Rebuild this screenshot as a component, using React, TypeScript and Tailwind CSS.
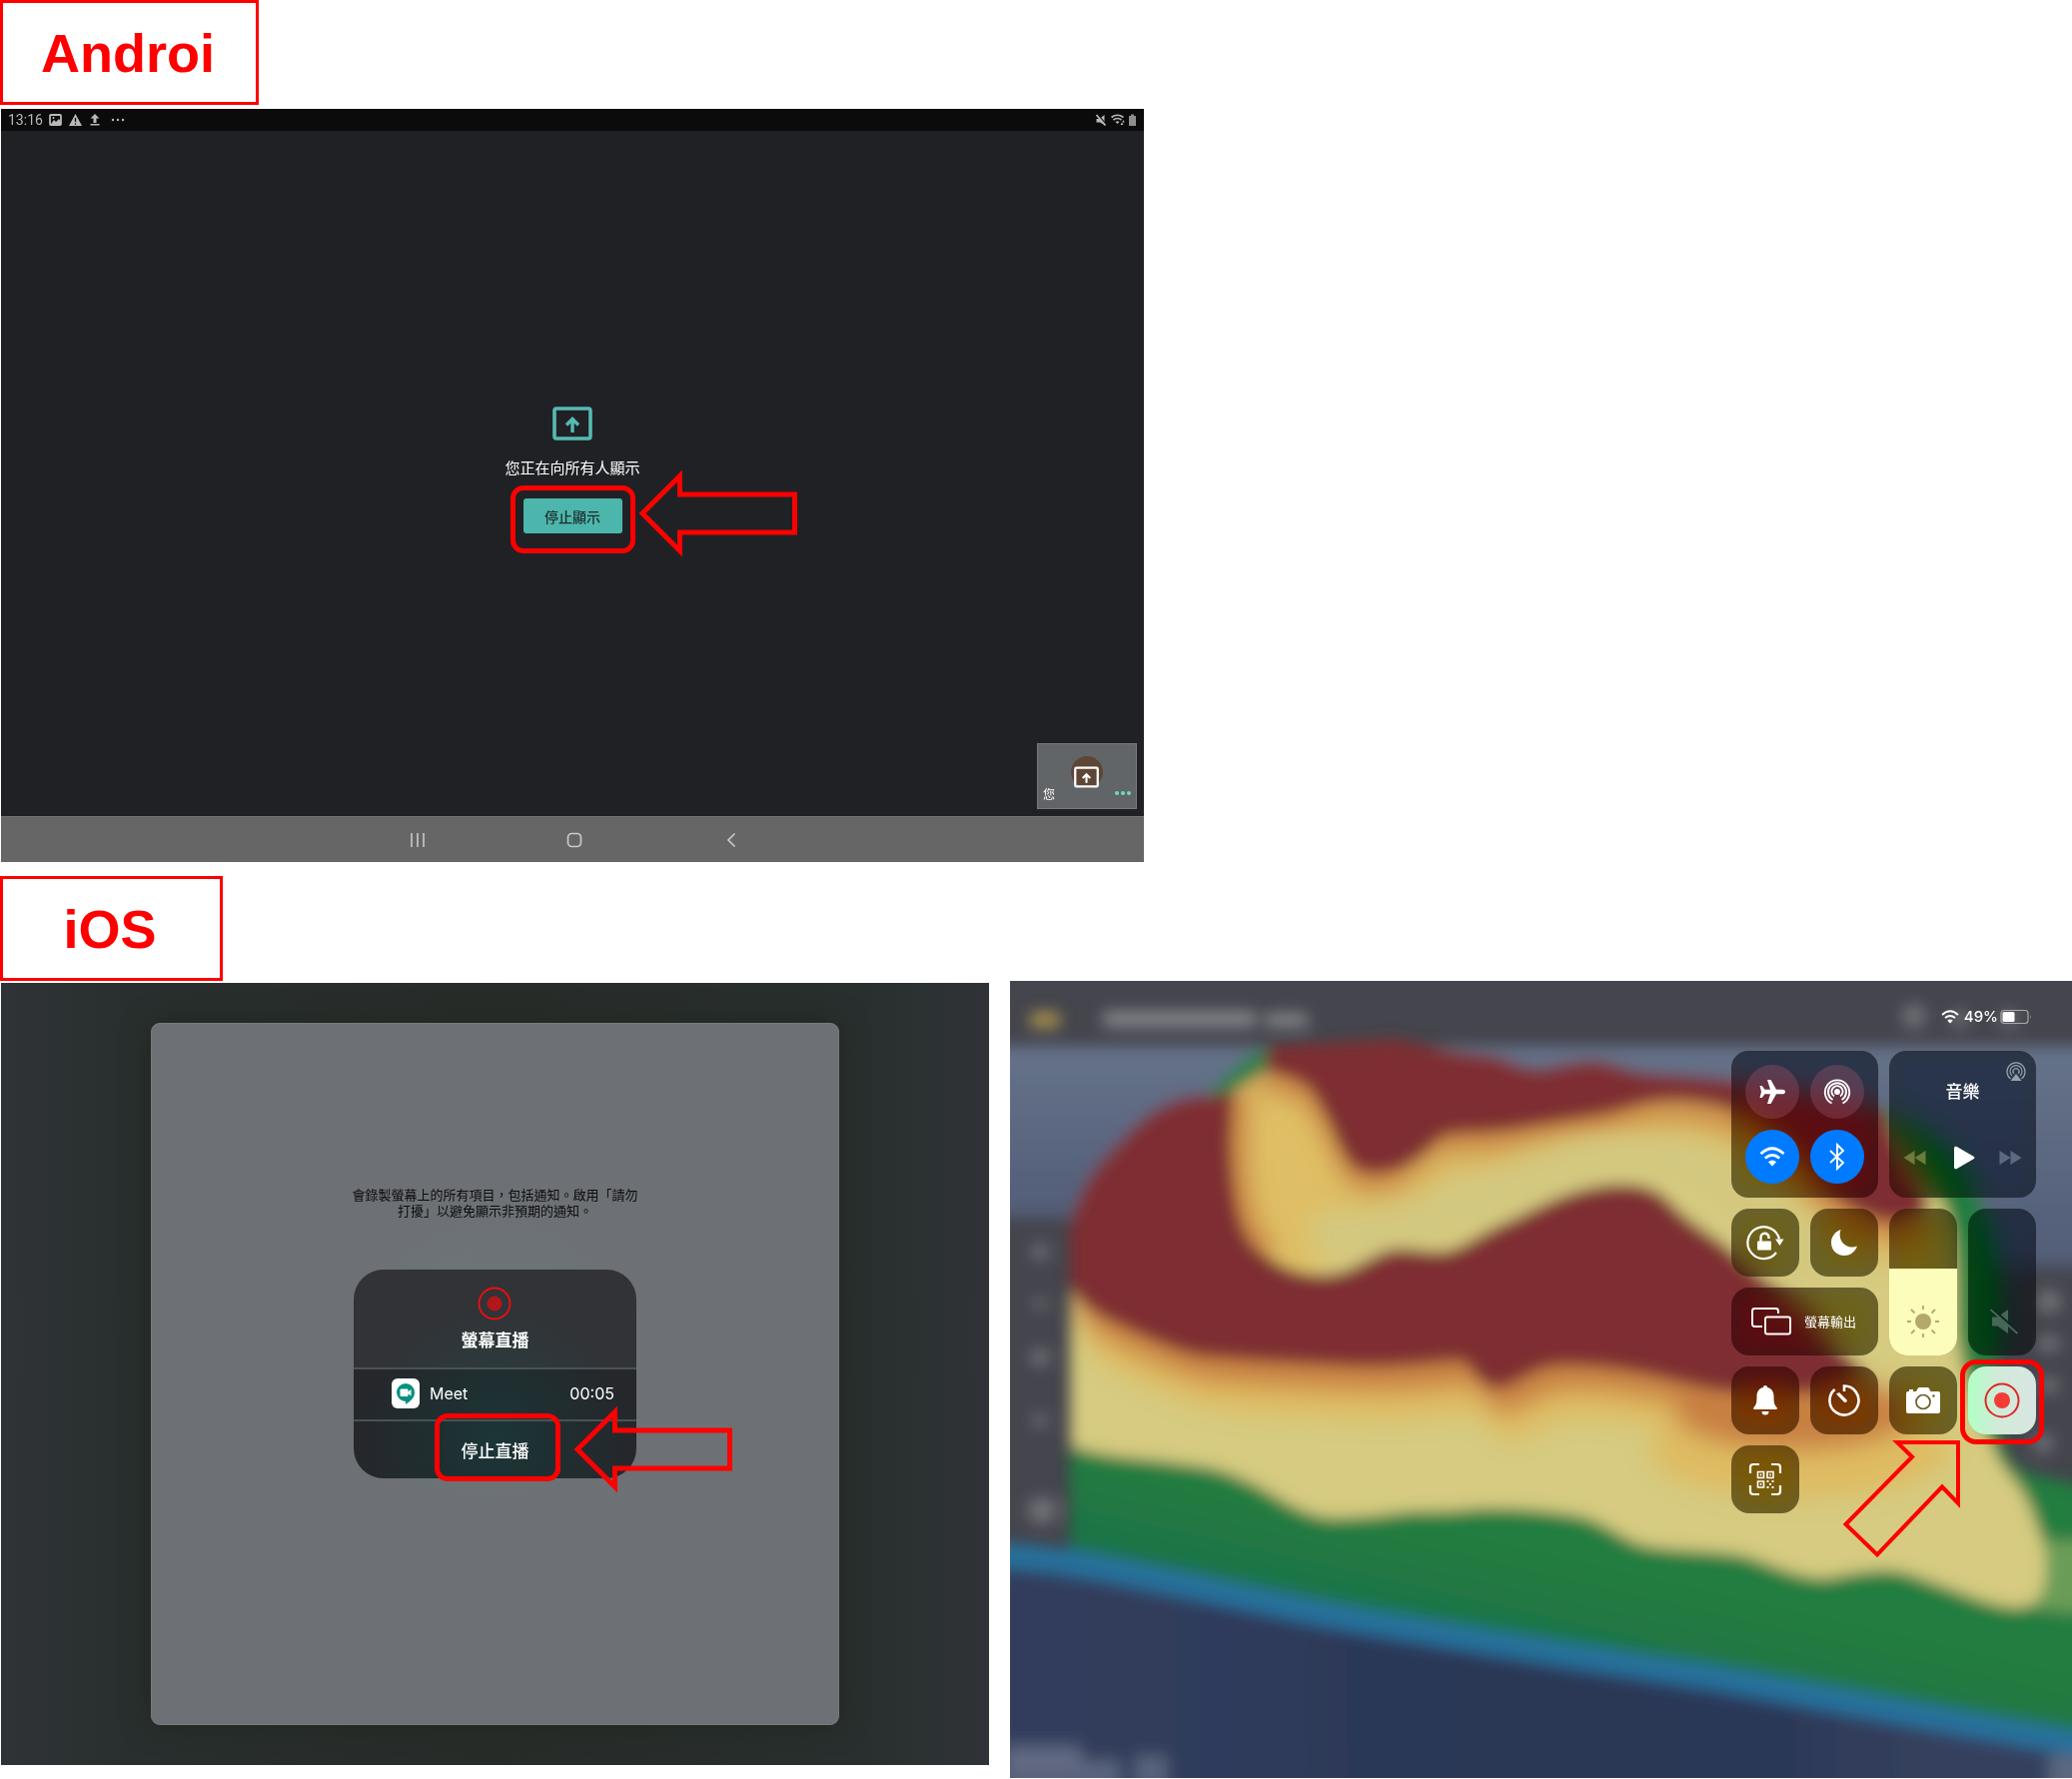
import React from "react";

const CJK = "font-['Noto_Sans_CJK_TC',sans-serif]";
const LATIN = "font-[Inter,'Liberation_Sans',sans-serif]";

function PlatformLabel({ children, className }: { children: React.ReactNode; className: string }) {
  return (
    <h2
      className={`flex h-[105px] items-center justify-center border-[3px] border-[#ff0000] bg-white pr-[3px] font-['Liberation_Sans',Arial,sans-serif] text-[54px] leading-none font-bold text-[#ff0000] ${className}`}
    >
      {children}
    </h2>
  );
}

function LeftArrow({ className }: { className: string }) {
  return (
    <svg aria-hidden="true" width="159" height="88" viewBox="0 0 159 88" className={`pointer-events-none absolute ${className}`}>
      <path d="M4 44 41.500 6.500V25H156.500V63H41.500V81.500Z" fill="none" stroke="#ff0000" strokeWidth="5" strokeMiterlimit="10" />
    </svg>
  );
}

function PresentIcon({ className }: { className: string }) {
  return (
    <svg aria-hidden="true" viewBox="0 0 40 34" className={className}>
      <rect x="2" y="2" width="36" height="30" rx="2" fill="none" stroke="currentColor" strokeWidth="3.600" />
      <path d="M20 26V13M14 18.500l6-6 6 6" fill="none" stroke="currentColor" strokeWidth="3.400" />
    </svg>
  );
}

function AndroidScreen() {
  return (
    <section aria-label="Android" className="mx-px mt-1 flex aspect-[1144/754] w-[55.160%] min-w-[640px] flex-col bg-[#202125]">
      <header className="flex h-[22px] items-center bg-[#0b0b0c] pr-[7px] pl-[7px] text-[#b9b9b9]">
        <time className="mr-[7px] w-[34px] font-[Roboto,sans-serif] text-[14px] leading-none">13:16</time>
        <svg aria-hidden="true" width="80" height="14" viewBox="0 0 80 14">
          <rect x="1" y="2" width="11" height="10" rx="1" fill="none" stroke="currentColor" strokeWidth="1.800" />
          <path d="M2 11l3-4 2 2 3-3 2 3v2z" fill="currentColor" />
          <circle cx="4.500" cy="5" r="1" fill="currentColor" />
          <path d="M26.500 1 33 13H20z" fill="currentColor" />
          <path d="M26.500 5v4M26.500 10.300v1.500" stroke="#0b0b0c" strokeWidth="1.300" />
          <path d="M46 1l4.500 4.500h-3V10h-3V5.500h-3zM41.500 11h9v1.500h-9z" fill="currentColor" />
          <circle cx="64" cy="7" r="1.200" fill="currentColor" />
          <circle cx="69" cy="7" r="1.200" fill="currentColor" />
          <circle cx="74" cy="7" r="1.200" fill="currentColor" />
        </svg>
        <svg aria-hidden="true" width="42" height="14" viewBox="0 0 42 14" className="ml-auto">
          <path d="M1.500 6h3L9.500 2v10L5 9.500H1.500z" fill="currentColor" />
          <path d="M2 1l9.500 11" stroke="#0b0b0c" strokeWidth="1.600" />
          <path d="M1.500 2l9 10.500" stroke="currentColor" strokeWidth="1.800" />
          <path d="M16.500 4.500q6-4.500 12 0M18.500 7q4-3 8 0" fill="none" stroke="currentColor" strokeWidth="1.700" />
          <path d="M20.500 9q2-1.500 4 0l-2 2z" fill="currentColor" />
          <path d="M25.500 12l1.500-2.500 1.500 2.500zM28.500 7l1.200 2.500h-2.400z" fill="currentColor" />
          <path d="M34 3h2V1.500h3V3h2v10h-7z" fill="#8d8d8d" />
        </svg>
      </header>

      <div className="relative flex flex-1 flex-col items-center justify-center pb-[7px]">
        <PresentIcon className="h-[34px] w-10 text-[#55bbb2]" />
        <p className={`mt-[15px] mb-[19px] text-[15px] leading-6 text-white ${CJK}`}>您正在向所有人顯示</p>
        <div className="relative">
          <button type="button" className={`block h-[35px] w-[99px] rounded-[3px] bg-[#4db6ac] text-[14px] leading-none font-medium text-[#1c2b2c] ${CJK}`}>
            停止顯示
          </button>
          <div className="pointer-events-none absolute -inset-x-[13px] -top-[13px] -bottom-[20px] rounded-[13px] border-[5px] border-[#ff0000]" />
          <LeftArrow className="-top-[29px] left-[115px]" />
        </div>

        <div className="absolute right-[7px] bottom-[7px] flex h-[66px] w-[100px] items-end justify-between border border-[#77797c] bg-[#626568] px-[5px] pb-1">
          <span className={`text-[12px] leading-5 text-white ${CJK}`}>您</span>
          <div className="absolute top-[12px] left-[33px] size-8 rounded-full bg-[#5d4636]" />
          <PresentIcon className="absolute top-[22px] left-[36px] h-[22px] w-[25px] text-white" />
          <svg aria-hidden="true" width="16" height="20" viewBox="0 0 16 20">
            <circle cx="2" cy="9" r="2" fill="#6fdcb8" />
            <circle cx="8" cy="9" r="2" fill="#6fdcb8" />
            <circle cx="14" cy="9" r="2" fill="#6fdcb8" />
          </svg>
        </div>
      </div>

      <nav className="flex h-[46px] items-center justify-center gap-[141px] border-t border-[#747474] bg-[#666] pl-1 text-[#c9c9c9]">
        <button type="button" aria-label="Recents">
          <svg width="16" height="16" viewBox="0 0 16 16"><path d="M2 1v14M8 1v14M14 1v14" stroke="currentColor" strokeWidth="1.600" /></svg>
        </button>
        <button type="button" aria-label="Home">
          <svg width="16" height="16" viewBox="0 0 16 16"><rect x="1.500" y="1.500" width="13" height="13" rx="4" fill="none" stroke="currentColor" strokeWidth="1.700" /></svg>
        </button>
        <button type="button" aria-label="Back">
          <svg width="16" height="16" viewBox="0 0 16 16"><path d="M11.500 1.500 5 8l6.500 6.500" fill="none" stroke="currentColor" strokeWidth="1.700" /></svg>
        </button>
      </nav>
    </section>
  );
}

function BroadcastScreen() {
  return (
    <section aria-label="iOS" className="mt-0.5 ml-px flex aspect-[989/783] justify-center self-start bg-[linear-gradient(90deg,#2f3337_0%,#292f2e_13%,#272c29_50%,#292f2e_87%,#2f3337_100%)] py-10">
      <div className="flex w-[69.700%] flex-col items-center rounded-[9px] border border-[#777b7e] bg-[#6d7074] bg-[radial-gradient(circle_at_50%_48%,#6c777b_0%,#6d7074_35%)] pt-[163px] shadow-[0_0_28px_#20281f]">
        <p className={`text-center text-[13px] leading-4 text-[#0b0c0d] ${CJK}`}>
          會錄製螢幕上的所有項目，包括通知。啟用「請勿
          <br />
          打擾」以避免顯示非預期的通知。
        </p>

        <div className={`mt-[51px] flex w-[283px] flex-col rounded-[30px] bg-[#25272b] bg-[radial-gradient(circle_at_50%_82%,#1b3638_0%,#1f2f31_25%,#25272b_62%)] text-[17px] leading-6 text-white ${CJK}`}>
          <div className="flex h-[98px] flex-col items-center rounded-t-[30px] bg-white/6 pt-[17px]">
            <svg aria-hidden="true" width="34" height="34" viewBox="0 0 34 34">
              <circle cx="17" cy="17" r="15.500" fill="none" stroke="#f20d0d" strokeWidth="1.800" />
              <circle cx="17" cy="17" r="7.500" fill="#b01719" />
            </svg>
            <h3 className="mt-[7px] font-bold">螢幕直播</h3>
          </div>
          <div className="flex h-[54px] items-center border-y-2 border-[#485254] pr-[22px] pb-0.5 pl-[38px]">
            <svg aria-hidden="true" width="28" height="30" viewBox="0 0 28 30">
              <rect width="28" height="30" rx="6" fill="#fff" />
              <path d="M14 5a9 9 0 0 1 9 9.500c0 5-4.500 8.500-9 11.500v-3a9 9 0 0 1-9-9A9 9 0 0 1 14 5z" fill="#098f7e" />
              <rect x="8.500" y="10.500" width="8" height="7.500" rx="1" fill="#fff" />
              <path d="M16 13.500l3.500-2.500v6.500L16 15z" fill="#fff" />
            </svg>
            <span className={`ml-[10px] text-[16px] ${LATIN}`}>Meet</span>
            <time className={`ml-auto text-[16px] ${LATIN}`}>00:05</time>
          </div>
          <div className="relative h-[57px]">
            <button type="button" className="block h-full w-full rounded-b-[30px] font-medium">停止直播</button>
            <div className="pointer-events-none absolute -top-2 -bottom-[3px] left-[81px] w-[126px] rounded-[13px] border-[5px] border-[#ff0000]" />
            <LeftArrow className="-top-4 left-[220px]" />
          </div>
        </div>
      </div>
    </section>
  );
}

const LOWER_LOBE =
  "M58 300 C56 270 58 245 65 230 C80 200 90 182 104 168 C120 150 135 135 150 127 C170 116 190 112 222 110 C216 150 218 190 223 220 C228 250 236 265 246 271 C268 289 290 297 310 297 C330 298 345 290 356 284 C370 276 380 271 388 271 C405 271 420 275 434 274 C455 271 470 256 494 246 C520 235 540 222 563 215 C585 208 605 205 623 207 C640 209 648 214 655 220 C672 240 690 250 708 263 C725 276 740 290 756 303 C785 320 808 335 812 350 C818 368 845 380 852 394 C840 412 760 412 715 408 C680 403 650 392 623 388 C590 382 565 380 540 383 C515 388 505 404 485 405 C465 400 465 377 448 377 C415 380 390 383 356 383 C290 380 240 378 186 372 C150 362 125 348 104 339 C85 330 68 318 58 300Z";
const UPPER_LOBE =
  "M249 86 C248 76 250 72 256 68 C300 64 340 64 384 60 C400 62 415 67 430 70 C450 76 465 74 485 75 C500 80 515 90 531 88 C550 86 568 79 586 80 C605 82 622 92 641 93 C665 95 690 96 709 98 C760 104 830 112 868 126 C882 150 892 180 908 205 C935 238 890 246 860 232 C835 222 815 205 800 190 C775 160 745 130 709 122 C690 118 665 116 646 118 C625 120 605 130 586 132 C555 137 525 142 494 147 C470 150 450 147 434 152 C420 160 412 174 402 178 C390 186 380 190 370 189 C355 190 350 188 342 180 C330 165 328 150 320 137 C312 120 305 107 297 101 C280 92 265 90 249 86Z";
const RELIEF =
  "M60 465 V250 C65 215 85 185 104 168 C120 150 135 135 150 127 C170 116 190 114 205 114 C225 98 240 80 256 66 C300 62 340 62 384 58 C415 64 450 73 485 75 C500 80 515 90 531 88 C550 86 568 79 586 80 C605 82 622 92 641 93 C720 97 830 112 870 126 C890 155 910 195 935 222 C948 255 948 300 948 350 C955 400 972 440 990 478 C1005 500 1020 515 1026 540 C1038 565 1042 600 1028 622 C1010 634 985 624 965 618 C940 608 925 603 905 596 C880 585 845 593 820 598 C790 600 765 585 735 576 C705 570 665 572 632 565 C605 555 590 538 563 535 C535 530 500 528 471 528 C445 532 425 531 402 531 C375 535 350 538 320 538 C305 536 295 532 287 528 C265 518 250 505 232 499 C215 490 195 486 173 484 C140 478 90 478 60 465Z";

const GHOSTS = [
  [30, 271, 9, 9], [30, 323, 7, 6], [30, 377, 11, 9], [30, 440, 8, 7], [32, 530, 15, 14],
  [1040, 321, 13, 12], [1040, 363, 12, 9], [1040, 405, 10, 9], [1034, 463, 11, 10],
  [905, 35, 13, 12], [950, 38, 10, 8], [1000, 38, 10, 8],
];

function Wallpaper() {
  return (
    <svg aria-hidden="true" viewBox="0 0 1063 798" preserveAspectRatio="none" className="absolute inset-0 h-full w-full">
      <defs>
        <filter id="soft" x="-5%" y="-5%" width="110%" height="110%"><feGaussianBlur stdDeviation="7.500" /></filter>
        <filter id="band" x="-10%" y="-20%" width="120%" height="140%"><feGaussianBlur stdDeviation="10" /></filter>
        <clipPath id="relief"><path d={RELIEF} /></clipPath>
        <linearGradient id="sky" x1="0" y1="0" x2="0" y2="1"><stop offset="0" stopColor="#66738a" /><stop offset="1" stopColor="#525d77" /></linearGradient>
        <linearGradient id="navy" x1="0" y1="0" x2="1" y2="0"><stop offset="0" stopColor="#333f5e" /><stop offset="0.450" stopColor="#2a3757" /><stop offset="0.700" stopColor="#2b3858" /><stop offset="0.850" stopColor="#36415e" /><stop offset="1" stopColor="#32415f" /></linearGradient>
        <linearGradient id="grass" gradientUnits="userSpaceOnUse" x1="500" y1="560" x2="470" y2="690"><stop offset="0" stopColor="#237d3f" /><stop offset="1" stopColor="#1c7049" /></linearGradient>
      </defs>
      <rect width="1063" height="798" fill="#44454d" />
      <g filter="url(#soft)">
        <rect x="-30" y="65" width="1130" height="172" fill="url(#sky)" />
        <rect x="900" y="65" width="200" height="222" fill="url(#sky)" />
        <path d="M60 440 L60 600 L1100 790 V510 C1050 500 1010 495 1000 478 C985 440 988 400 988 300 C985 230 960 160 870 126 L850 300 L600 500Z" fill="url(#grass)" />
        <path d="M1035 560 L1100 560 V635 L1030 630Z" fill="#6b9c58" />
        <g clipPath="url(#relief)">
          <path d={RELIEF} fill="#d6cb80" />
          <g filter="url(#band)">
            <path d={LOWER_LOBE} transform="translate(14 56)" fill="#dfbb62" />
            <ellipse cx="790" cy="470" rx="150" ry="48" fill="#dfbb62" />
            <path d={UPPER_LOBE} transform="translate(4 44)" fill="#dcb962" />
            <path d="M215 90 H300 L350 230 L300 300 L225 280Z" fill="#dfbf65" />
            <path d={LOWER_LOBE} transform="translate(8 28)" fill="#c87f43" />
            <ellipse cx="785" cy="432" rx="120" ry="38" fill="#c87f43" />
            <path d={UPPER_LOBE} transform="translate(-6 20)" fill="#c87f43" />
            <path d="M222 110 C216 150 218 190 223 220 C228 250 236 265 256 278" fill="none" stroke="#c87f43" strokeWidth="38" />
          </g>
          <path d="M320 252 C370 262 440 236 520 200 C580 170 640 160 700 195 C730 215 750 240 800 280" fill="none" stroke="#d3c87f" strokeWidth="46" strokeLinecap="round" filter="url(#band)" />
          <path d={LOWER_LOBE} fill="#7e2f32" stroke="#7e2f32" strokeWidth="6" />
          <path d={UPPER_LOBE} fill="#7e2f32" stroke="#7e2f32" strokeWidth="6" />
        </g>
        <path d="M196 116 C215 95 235 76 258 64 L256 90 L222 112Z" fill="#2a8048" />
        <path d="M-30 573 C100 580 220 618 356 641 C480 662 590 680 709 698 C840 722 960 745 1100 768 V850 H-30Z" fill="url(#navy)" />
        <path d="M-30 575 C60 572 220 618 356 641 C480 662 590 680 709 698 C840 722 960 745 1100 768" fill="none" stroke="#25719c" strokeWidth="25" />
        <g fill="#fff" fillOpacity="0.350">
          <rect x="92" y="30" width="155" height="16" rx="6" />
          <rect x="254" y="32" width="45" height="14" rx="6" />
          <rect x="-5" y="765" width="76" height="18" fillOpacity="0.200" />
          <rect x="-5" y="780" width="115" height="30" fillOpacity="0.200" />
          <rect x="125" y="776" width="32" height="30" fillOpacity="0.200" />
          <rect x="1040" y="775" width="40" height="40" fillOpacity="0.200" />
        </g>
        <rect x="20" y="31" width="30" height="16" rx="5" fill="#a8914f" />
        <g fill="#fff" fillOpacity="0.230">
          {GHOSTS.map(([cx, cy, rx, ry]) => (
            <ellipse key={`${cx}-${cy}`} cx={cx} cy={cy} rx={rx} ry={ry} />
          ))}
        </g>
      </g>
    </svg>
  );
}

const TILE = "bg-black/52 backdrop-blur-md backdrop-saturate-200 text-white";

function Tile({ label, className = "", children }: { label: string; className?: string; children: React.ReactNode }) {
  return (
    <button type="button" aria-label={label} className={`flex items-center justify-center rounded-[18px] ${TILE} ${className}`}>
      {children}
    </button>
  );
}

function Round({ label, className, children }: { label: string; className: string; children: React.ReactNode }) {
  return (
    <button type="button" aria-label={label} className={`flex items-center justify-center rounded-full ${className}`}>
      {children}
    </button>
  );
}

function WifiGlyph({ size }: { size: number }) {
  return (
    <svg aria-hidden="true" width={size} height={size} viewBox="0 0 26 26" fill="none" stroke="currentColor" strokeWidth="2.800">
      <path d="M1.500 10Q13-.5 24.500 10M5.800 14.500q7.200-6.200 14.400 0" />
      <path d="M9 18.300q4-3.400 8 0L13 22.500z" fill="currentColor" stroke="none" />
    </svg>
  );
}

function ControlCenterScreen() {
  return (
    <section aria-label="iOS Control Center" className="relative aspect-[1063/798] overflow-hidden bg-[#44454d]">
      <Wallpaper />
      <div className="relative flex flex-col items-end pr-9">
        <div className="mt-[26px] mb-[24px] flex h-5 items-center text-white">
          <WifiGlyph size={18} />
          <span className={`mr-[2px] ml-[5px] text-[15px] leading-5 font-medium ${LATIN}`}>49%</span>
          <svg aria-hidden="true" width="32" height="16" viewBox="0 0 32 16" className="mr-1">
            <rect x="1" y="1.500" width="27" height="13" rx="3" fill="none" stroke="#a9a9ad" strokeWidth="1.200" />
            <rect x="2.500" y="3" width="12" height="10" rx="1.500" fill="#fff" />
            <path d="M30 6q1.500 2 0 4z" fill="#a9a9ad" />
          </svg>
        </div>

        <div className="grid auto-rows-[68px] grid-cols-[repeat(4,68px)] gap-[11px]">
          <div className={`col-span-2 row-span-2 grid grid-cols-2 gap-[11px] rounded-[17px] p-[14px] ${TILE}`}>
            <Round label="Airplane mode" className="bg-[#a3526a]/35">
              <svg width="28" height="28" viewBox="0 0 28 28" fill="#fff">
                <path d="M27 14c0 1.500-1.500 2.300-3 2.300h-6L12.500 26H9l3-9.700H6.500L3.700 20H1.500L3 14 1.500 8h2.200l2.800 3.700H12L9 2h3.500l5.500 9.700h6c1.500 0 3 .8 3 2.300z" />
              </svg>
            </Round>
            <Round label="AirDrop" className="bg-[#a3526a]/35">
              <svg width="28" height="28" viewBox="0 0 28 28" fill="none" stroke="#fff" strokeWidth="1.900">
                <path d="M8.500 25.500a12.200 12.200 0 1 1 11 0" />
                <path d="M9.500 22a9 9 0 1 1 9 0" />
                <path d="M11 18.500a5.600 5.600 0 1 1 6 0" />
                <circle cx="14" cy="14" r="2" fill="#fff" />
              </svg>
            </Round>
            <Round label="Wi-Fi" className="bg-[#007aff]">
              <WifiGlyph size={26} />
            </Round>
            <Round label="Bluetooth" className="bg-[#007aff]">
              <svg width="20" height="28" viewBox="0 0 20 28" fill="none" stroke="#fff" strokeWidth="1.900">
                <path d="M3 8l13 12-6 6V2l6 6L3 20" />
              </svg>
            </Round>
          </div>

          <div className={`relative col-span-2 row-span-2 flex flex-col items-center justify-between rounded-[17px] px-[14px] pt-7 pb-7 ${TILE}`}>
            <h3 className={`text-[17px] leading-6 font-medium ${CJK}`}>音樂</h3>
            <button type="button" aria-label="AirPlay" className="absolute top-[11px] right-[10px] text-[#99a1ab]">
              <svg width="20" height="20" viewBox="0 0 20 20" fill="none" stroke="currentColor" strokeWidth="1.200">
                <path d="M4.500 17a9 9 0 1 1 11 0M6 14a6 6 0 1 1 8 0M7.800 11.800a3 3 0 1 1 4.400 0" />
                <path d="M10 12l5.500 7h-11z" fill="currentColor" stroke="none" />
              </svg>
            </button>
            <div className="flex w-full items-center justify-between">
              <button type="button" aria-label="Previous" className="text-[#8c9550]/70">
                <svg width="23" height="16" viewBox="0 0 23 16" fill="currentColor"><path d="M11.500 1v14L.500 8zM22.500 1v14l-11-7z" /></svg>
              </button>
              <button type="button" aria-label="Play" className="pl-1">
                <svg width="21" height="24" viewBox="0 0 21 24" fill="#fff"><path d="M0 2.500C0 .8 1.500.3 2.800 1l16.700 9.700c1.200.7 1.200 1.900 0 2.600L2.800 23C1.500 23.700 0 23.200 0 21.500z" /></svg>
              </button>
              <button type="button" aria-label="Next" className="text-[#5c6a7e]">
                <svg width="23" height="16" viewBox="0 0 23 16" fill="currentColor"><path d="M.500 1v14l11-7zM11.500 1v14l11-7z" /></svg>
              </button>
            </div>
          </div>

          <Tile label="Rotation lock">
            <svg width="38" height="36" viewBox="0 0 38 36" fill="none" stroke="#fff">
              <path d="M33 14.500A16 16 0 1 0 30 28" strokeWidth="2.200" />
              <path d="M29 14.500h8.500L33.500 21z" fill="#fff" stroke="none" />
              <rect x="11" y="16.500" width="14" height="9" rx="1" fill="#fff" stroke="none" />
              <path d="M14.500 17v-4a4 4 0 0 1 8-.5v1.500" strokeWidth="2.400" />
            </svg>
          </Tile>
          <Tile label="Do not disturb">
            <svg width="28" height="28" viewBox="0 0 28 28" fill="#fff">
              <path d="M10.500 1C4 3.500 1 8.500 1 14c0 7.500 5.500 13 13 13 5.500 0 10.500-3 13-9.500-9 4-20.500-4-16.500-16.500z" />
            </svg>
          </Tile>

          <div className={`row-span-2 flex flex-col justify-end overflow-hidden rounded-[18px] ${TILE}`}>
            <div className="flex h-[87px] items-end justify-center bg-[#fdfdbb] pb-[17px]">
              <svg role="img" aria-label="Brightness" width="34" height="34" viewBox="0 0 34 34" fill="none" stroke="#b4a86c" strokeWidth="1.800">
                <circle cx="17" cy="17" r="8" fill="#b4a86c" stroke="none" />
                <path d="M17 1v4M17 29v4M1 17h4M29 17h4M5 5l3.500 3.500M25.500 25.500 29 29M5 29l3.500-3.500M25.500 8.500 29 5" />
              </svg>
            </div>
          </div>
          <div className={`row-span-2 flex items-end justify-center rounded-[18px] pb-[21px] pl-1 ${TILE}`}>
            <svg role="img" aria-label="Volume" width="30" height="26" viewBox="0 0 30 26" className="text-[#476656]">
              <path d="M3 8.500h5.500L19 1v24L8.500 17.500H3z" fill="currentColor" />
              <path d="M2.500 0l27 24" stroke="#0d2620" strokeWidth="3" />
              <path d="M1.500 1l27 24" stroke="currentColor" strokeWidth="2" />
            </svg>
          </div>

          <button type="button" className={`col-span-2 flex items-center rounded-[18px] pl-[19px] text-[13px] leading-5 ${TILE} ${CJK}`}>
            <svg aria-hidden="true" width="42" height="30" viewBox="0 0 42 30" fill="none" stroke="#fff" strokeWidth="1.900" className="mr-[12px]">
              <path d="M28 7V4.500Q28 2 25.500 2H4.500Q2 2 2 4.500v13Q2 20 4.500 20H12" />
              <rect x="15" y="10.500" width="25" height="17" rx="2" />
            </svg>
            螢幕輸出
          </button>

          <Tile label="Alerts">
            <svg width="26" height="32" viewBox="0 0 26 32" fill="#fff">
              <path d="M13 1c1.200 0 2 .8 2.200 2C19.500 4 21.500 7.500 21.500 12c0 6 .5 8.500 3 11 .8.800.5 2-.500 2H2c-1 0-1.300-1.200-.5-2 2.500-2.500 3-5 3-11 0-4.500 2-8 6.300-9C11 1.800 11.800 1 13 1zM9.500 27h7a3.500 3.500 0 0 1-7 0z" />
            </svg>
          </Tile>
          <Tile label="Timer">
            <svg width="34" height="34" viewBox="0 0 34 34" fill="none" stroke="#fff" strokeWidth="2.600">
              <path d="M17 8V2.500A14.500 14.500 0 1 1 7.500 6" />
              <path d="M9 10.500l3-1.500 7.500 7.500c1 1.500-.8 3.300-2.500 2.300z" fill="#fff" stroke="none" />
            </svg>
          </Tile>
          <Tile label="Camera">
            <svg width="36" height="28" viewBox="0 0 36 28">
              <path d="M4 3h4v2H4zM11 5l2-3.500Q13.500 1 14.500 1h8q1 0 1.500 1L25.500 5H33q2 0 2 2v18q0 2-2 2H3q-2 0-2-2V7q0-2 2-2z" fill="#fff" />
              <circle cx="18" cy="15.500" r="7" fill="none" stroke="#6b5d26" strokeWidth="1.700" />
              <circle cx="28.500" cy="9.500" r="1.200" fill="#6b5d26" />
            </svg>
          </Tile>
          <div className="relative">
            <button
              type="button"
              aria-label="Screen recording"
              className="flex h-full w-full items-center justify-center rounded-[18px] bg-[linear-gradient(90deg,#b0ffc6,#d2ead9_45%,#d8e6e2)]"
            >
              <svg width="38" height="38" viewBox="0 0 38 38">
                <circle cx="19" cy="19" r="16.500" fill="none" stroke="#d92a25" strokeWidth="2" />
                <circle cx="19" cy="19" r="8" fill="#f13d36" />
              </svg>
            </button>
            <div className="pointer-events-none absolute -inset-x-[8px] -top-[7px] -bottom-[10px] rounded-[16px] border-[5px] border-[#ff0000]" />
            <svg aria-hidden="true" width="127" height="128" viewBox="0 0 127 128" className="pointer-events-none absolute top-[69px] -left-[130px]">
              <path d="M59 7h61v61L104 51.500 39 119.500 7.500 89 74 21.500Z" fill="none" stroke="#ff0000" strokeWidth="4" strokeMiterlimit="10" />
            </svg>
          </div>

          <Tile label="QR scanner">
            <svg width="34" height="34" viewBox="0 0 34 34" fill="none" stroke="#fff">
              <path d="M2 11V5q0-3 3-3h6M23 2h6q3 0 3 3v6M32 23v6q0 3-3 3h-6M11 32H5q-3 0-3-3v-6" strokeWidth="2.200" />
              <path d="M9.500 9.500h6v6h-6zM19 9.500h6v6h-6zM9.500 19h6v6h-6z" strokeWidth="1.600" />
              <path d="M11.800 12.500h1.500M21.300 12.500h1.500M11.800 22h1.500M18.500 19h2M23.500 19h2M21 22h2M18.500 25h2M23.500 25h2" strokeWidth="1.800" />
            </svg>
          </Tile>
        </div>
      </div>
    </section>
  );
}

export default function App() {
  return (
    <main className="flex w-full flex-col bg-white">
      <PlatformLabel className="w-[259px]">Androi</PlatformLabel>
      <AndroidScreen />
      <PlatformLabel className="mt-[14px] w-[223px]">iOS</PlatformLabel>
      <div className="grid grid-cols-[990fr_1063fr] gap-[21px]">
        <BroadcastScreen />
        <ControlCenterScreen />
      </div>
    </main>
  );
}
